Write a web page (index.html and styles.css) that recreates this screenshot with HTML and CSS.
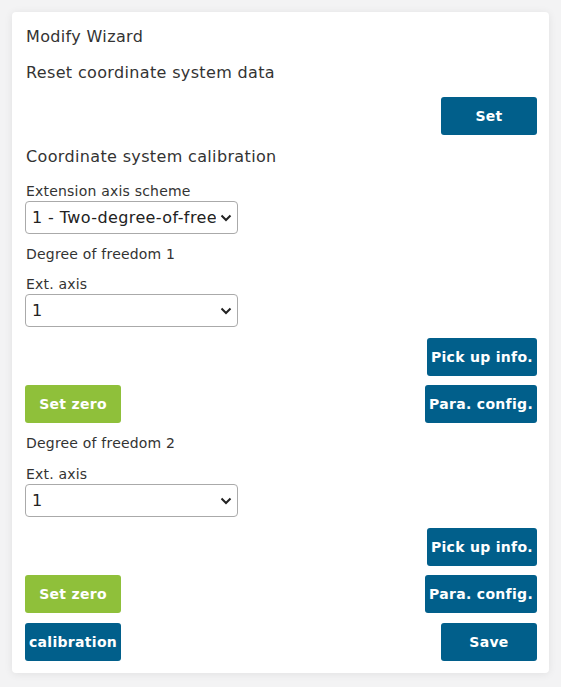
FILE: index.html
```html
<!DOCTYPE html>
<html>
<head>
<meta charset="utf-8">
<link rel="stylesheet" href="styles.css">
</head>
<body>
<div class="card">
  <div class="title">Modify Wizard</div>
  <div class="section">Reset coordinate system data</div>
  <div class="row end r-set"><button class="btn blue">Set</button></div>
  <div class="section s-cal">Coordinate system calibration</div>
  <div class="label l-scheme">Extension axis scheme</div>
  <div class="select"><span class="sel-text">1 - Two-degree-of-freedom</span><svg class="chev" width="12" height="8" viewBox="0 0 12 8"><path d="M1.5 1.5 L6 6 L10.5 1.5" fill="none" stroke="#222" stroke-width="2"/></svg></div>
  <div class="label l-dof">Degree of freedom 1</div>
  <div class="label l-ext">Ext. axis</div>
  <div class="select"><span class="sel-text">1</span><svg class="chev" width="12" height="8" viewBox="0 0 12 8"><path d="M1.5 1.5 L6 6 L10.5 1.5" fill="none" stroke="#222" stroke-width="2"/></svg></div>
  <div class="row end r-pick"><button class="btn blue">Pick up info.</button></div>
  <div class="row between r-zero"><button class="btn green">Set zero</button><button class="btn blue">Para. config.</button></div>
  <div class="label l-dof2">Degree of freedom 2</div>
  <div class="label l-ext2">Ext. axis</div>
  <div class="select"><span class="sel-text">1</span><svg class="chev" width="12" height="8" viewBox="0 0 12 8"><path d="M1.5 1.5 L6 6 L10.5 1.5" fill="none" stroke="#222" stroke-width="2"/></svg></div>
  <div class="row end r-pick"><button class="btn blue">Pick up info.</button></div>
  <div class="row between r-zero"><button class="btn green">Set zero</button><button class="btn blue">Para. config.</button></div>
  <div class="row between r-last"><button class="btn blue">calibration</button><button class="btn blue">Save</button></div>
</div>
</body>
</html>
```

FILE: styles.css
```css
html, body {
  margin: 0;
  padding: 0;
}
body {
  background: #f3f3f4;
  font-family: "DejaVu Sans", Verdana, sans-serif;
  color: #333;
  padding: 12px;
  width: 537px;
}
.card {
  background: #fff;
  border-radius: 4px;
  box-shadow: 0 1px 8px rgba(0, 0, 0, 0.08);
  padding: 13px 12px 12px 13px;
  display: flex;
  flex-direction: column;
  width: 537px;
  box-sizing: border-box;
}
.title, .section {
  font-size: 16px;
  line-height: 24px;
  padding-left: 1px;
  letter-spacing: 0.35px;
}
.section {
  margin-top: 12px;
}
.s-cal {
  margin-top: 10px;
}
.label {
  font-size: 14px;
  line-height: 20px;
  padding-left: 1px;
  letter-spacing: 0.2px;
}
.l-scheme { margin-top: 12px; }
.l-dof { margin-top: 10px; }
.l-ext { margin-top: 10px; }
.l-dof2 { margin-top: 10px; }
.l-ext2 { margin-top: 11px; }
.select {
  width: 213px;
  height: 33px;
  box-sizing: border-box;
  border: 1px solid #aaa;
  border-radius: 4px;
  display: flex;
  align-items: center;
  padding: 0 5px 0 6px;
  gap: 4px;
}
.sel-text {
  flex: 1;
  overflow: hidden;
  white-space: nowrap;
  font-size: 16px;
  letter-spacing: 0.4px;
  color: #222;
}
.chev {
  flex: none;
}
.row {
  display: flex;
}
.end { justify-content: flex-end; }
.between { justify-content: space-between; }
.r-set { margin-top: 12px; }
.r-pick { margin-top: 11px; }
.r-zero { margin-top: 9px; }
.r-last { margin-top: 10px; }
.btn {
  font-family: "DejaVu Sans", Verdana, sans-serif;
  font-weight: bold;
  font-size: 14px;
  letter-spacing: 0.3px;
  color: #fff;
  border: none;
  border-radius: 3px;
  min-width: 96px;
  height: 38px;
  padding: 0 4px;
  margin: 0;
}
.blue { background: #015f8b; }
.green { background: #8fc03a; }
```
